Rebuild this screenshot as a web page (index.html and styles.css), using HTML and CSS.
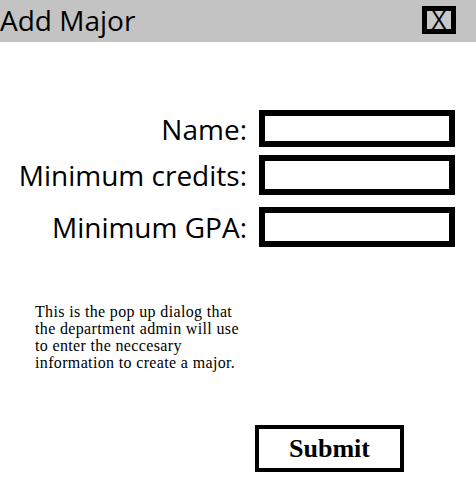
FILE: index.html
```html
<!DOCTYPE html>
<html>
<head>
<meta charset="utf-8">
<link rel="stylesheet" href="styles.css">
</head>
<body>
<div class="dialog">
  <div class="titlebar">
    <span class="title">Add Major</span>
    <span class="close">X</span>
  </div>
  <div class="form">
    <div class="row row-first"><label class="label">Name:</label><div class="field"></div></div>
    <div class="row row-second"><label class="label">Minimum credits:</label><div class="field field-tall"></div></div>
    <div class="row row-third"><label class="label">Minimum GPA:</label><div class="field field-tall"></div></div>
  </div>
  <p class="note">This is the pop up dialog that<br>the department admin will use<br>to enter the neccesary<br>information to create a major.</p>
  <div class="actions"><div class="submit">Submit</div></div>
</div>
</body>
</html>
```
FILE: styles.css
```css
html, body { margin: 0; padding: 0; background: #fff; }
.dialog { width: 476px; height: 498px; }
.titlebar {
  height: 42px;
  background: #c3c3c3;
  display: flex;
  align-items: center;
  justify-content: space-between;
  padding-right: 20px;
}
.title {
  font-family: "Open Sans", sans-serif;
  font-size: 28px;
  color: #000;
  line-height: 42px;
  margin-top: -2px;
}
.close {
  box-sizing: border-box;
  width: 34px;
  height: 28px;
  border: 5px solid #000;
  background: #c8c8c8;
  font-family: "Open Sans", sans-serif;
  font-size: 25px;
  line-height: 17px;
  text-align: center;
  color: #000;
  margin-top: -2px;
}
.form {
  display: flex;
  flex-direction: column;
  margin-top: 68px;
}
.row {
  display: flex;
  align-items: center;
  gap: 12px;
}
.row-second { margin-top: 8px; }
.row-third { margin-top: 12px; }
.label {
  width: 247px;
  font-family: "Open Sans", sans-serif;
  font-size: 28px;
  line-height: 36px;
  text-align: right;
  white-space: nowrap;
}
.field {
  box-sizing: border-box;
  width: 196px;
  height: 37px;
  border: 6px solid #000;
}
.field-tall { height: 40px; }
.note {
  font-family: "Liberation Serif", serif;
  font-size: 16px;
  line-height: 17px;
  letter-spacing: 0.35px;
  margin: 56px 0 0 35px;
}
.actions { display: flex; margin: 54px 0 0 255px; }
.submit {
  box-sizing: border-box;
  width: 149px;
  height: 47px;
  border: 4px solid #000;
  font-family: "Liberation Serif", serif;
  font-weight: bold;
  font-size: 26px;
  display: flex;
  align-items: center;
  justify-content: center;
}
```
